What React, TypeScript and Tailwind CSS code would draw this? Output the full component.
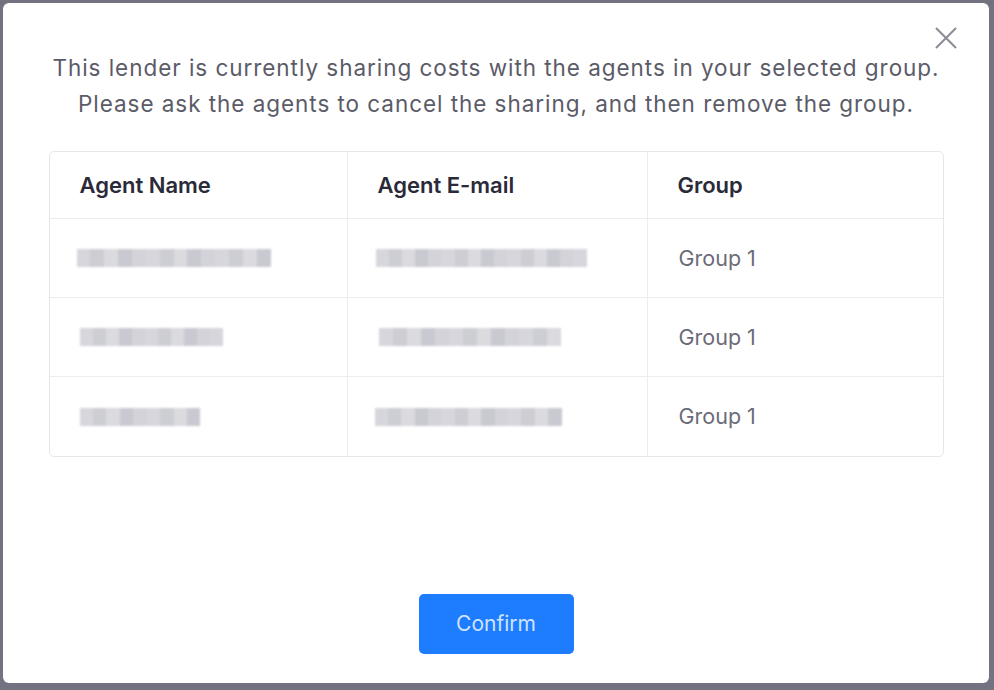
import React from 'react';

const rows = [
  { name: 194, email: 211, nameOff: 0, emailOff: 0 },
  { name: 143, email: 182, nameOff: 3, emailOff: 3 },
  { name: 121, email: 187, nameOff: 3, emailOff: -1 },
];

function Blur({ width, offset }: { width: number; offset: number }) {
  return (
    <div className="flex h-[18px] overflow-hidden blur-[1px]" style={{ width, marginLeft: offset }}>
      {Array.from({ length: Math.ceil(width / 14) }).map((_, i) => (
        <div
          key={i}
          className="h-full flex-1"
          style={{ backgroundColor: ['#d6d6dc', '#cdcdd4', '#dadadf', '#c9c9d1', '#d3d3d9'][i % 5] }}
        />
      ))}
    </div>
  );
}

export default function App() {
  return (
    <div className="w-[994px] h-[690px] bg-[#727280] pt-[3px] pl-[3px] font-['Inter',sans-serif]">
      <div className="relative w-[986px] h-[680px] bg-white rounded-[6px] flex flex-col items-center">
        <button className="absolute top-[22px] right-[30px] text-[#8b8b96]">
          <svg width="26" height="26" viewBox="0 0 26 26" fill="none" stroke="currentColor" strokeWidth="2">
            <path d="M3 3 L23 23 M23 3 L3 23" />
          </svg>
        </button>

        <p className="mt-[47px] text-center text-[22.5px] leading-[36px] text-[#5b5b68] tracking-[0.95px]">
          This lender is currently sharing costs with the agents in your selected group.
          <br />
          Please ask the agents to cancel the sharing, and then remove the group.
        </p>

        <div className="mt-[29px] w-[895px] border border-[#e6e6ec] rounded-[5px] overflow-hidden">
          <div className="grid grid-cols-[298px_300px_1fr] h-[67px] border-b border-[#ececf1] text-[22px] font-semibold text-[#2a2a38]">
            <div className="flex items-center pl-[30px] border-r border-[#ececf1]">Agent Name</div>
            <div className="flex items-center pl-[30px] border-r border-[#ececf1]">Agent E-mail</div>
            <div className="flex items-center pl-[30px]">Group</div>
          </div>
          {rows.map((r, i) => (
            <div
              key={i}
              className={`grid grid-cols-[298px_300px_1fr] h-[79px] text-[21.5px] text-[#6b6b78] ${i < rows.length - 1 ? 'border-b border-[#ececf1]' : ''}`}
            >
              <div className="flex items-center pl-[27px] border-r border-[#ececf1]">
                <Blur width={r.name} offset={r.nameOff} />
              </div>
              <div className="flex items-center pl-[28px] border-r border-[#ececf1]">
                <Blur width={r.email} offset={r.emailOff} />
              </div>
              <div className="flex items-center pl-[31px]">Group 1</div>
            </div>
          ))}
        </div>

        <button className="mt-[137px] w-[155px] h-[60px] rounded-[5px] bg-[#1e7cff] text-[21px] text-[#cfe3ff]">
          Confirm
        </button>
      </div>
    </div>
  );
}
